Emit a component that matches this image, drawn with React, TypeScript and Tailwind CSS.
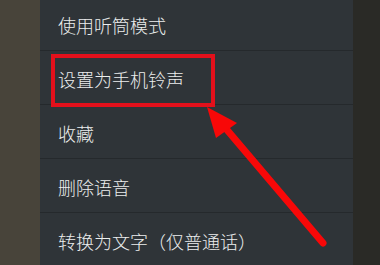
import React from "react";

const items = ["使用听筒模式", "设置为手机铃声", "收藏", "删除语音", "转换为文字（仅普通话）"];

export default function App() {
  return (
    <div
      className="relative flex h-[265px] w-[380px] overflow-hidden"
      style={{ fontFamily: '"Noto Sans CJK SC", "Noto Sans", sans-serif' }}
    >
      <div className="w-[40px] shrink-0 bg-[#48443a]" />
      <div className="flex flex-1 flex-col bg-[#2f3438] mt-[-3px]">
        {items.map((t) => (
          <div
            key={t}
            className="flex h-[54px] shrink-0 items-center border-b border-[#25292c] pl-[18px] pt-[3px] text-[18px] font-light text-[#eceeee]"
          >
            {t}
          </div>
        ))}
      </div>
      <div className="w-[27px] shrink-0 bg-[#2a2a26]" />

      <div className="absolute left-[51px] top-[54px] h-[53px] w-[164px] border-[4px] border-[#e3101b]" />

      <svg className="absolute left-0 top-0" width="380" height="265" viewBox="0 0 380 265">
        <line x1="323" y1="243" x2="222" y2="124" stroke="#f80808" strokeWidth="7" strokeLinecap="round" />
        <polygon points="207,107 237,123 216,138" fill="#f80808" />
      </svg>
    </div>
  );
}
